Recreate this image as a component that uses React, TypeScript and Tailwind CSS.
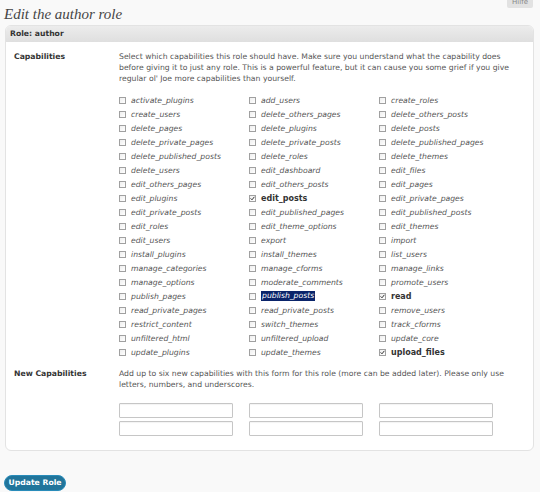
import React from "react";

const col1 = ["activate_plugins","create_users","delete_pages","delete_private_pages","delete_published_posts","delete_users","edit_others_pages","edit_plugins","edit_private_posts","edit_roles","edit_users","install_plugins","manage_categories","manage_options","publish_pages","read_private_pages","restrict_content","unfiltered_html","update_plugins"];
const col2 = ["add_users","delete_others_pages","delete_plugins","delete_private_posts","delete_roles","edit_dashboard","edit_others_posts","edit_posts","edit_published_pages","edit_theme_options","export","install_themes","manage_cforms","moderate_comments","publish_posts","read_private_posts","switch_themes","unfiltered_upload","update_themes"];
const col3 = ["create_roles","delete_others_posts","delete_posts","delete_published_pages","delete_themes","edit_files","edit_pages","edit_private_pages","edit_published_posts","edit_themes","import","list_users","manage_links","promote_users","read","remove_users","track_cforms","update_core","upload_files"];

const checked = new Set(["edit_posts", "read", "upload_files"]);

function Box({ on }: { on: boolean }) {
  return (
    <span className="w-[7px] h-[7px] border border-[#a0a0a0] bg-gradient-to-br from-[#eeeeee] to-white flex items-center justify-center shrink-0">
      {on && (
        <svg width="5" height="5" viewBox="0 0 5 5">
          <path d="M0.6 2.4 L2 3.8 L4.4 0.8" stroke="#333" strokeWidth="1" fill="none" />
        </svg>
      )}
    </span>
  );
}

function Cap({ name }: { name: string }) {
  const on = checked.has(name);
  const hl = name === "publish_posts";
  return (
    <div className="h-[14px] flex items-center gap-[5px]">
      <Box on={on} />
      {on ? (
        <span className="font-bold text-[#333] text-[8px]">{name}</span>
      ) : hl ? (
        <span className="italic text-white bg-[#0a246a] px-[1px] leading-[10px]">{name}</span>
      ) : (
        <span className="italic text-[#555]">{name}</span>
      )}
    </div>
  );
}

export default function App() {
  const rows = col1.map((_, i) => [col1[i], col2[i], col3[i]]);
  return (
    <div
      className="w-[540px] h-[492px] bg-[#f9f9f9] relative overflow-hidden text-[#333]"
      style={{ fontFamily: '"DejaVu Sans", Verdana, sans-serif' }}
    >
      <div className="absolute right-[7px] top-0 w-[26px] h-[8px] bg-[#e2e2e2] rounded-b-[2px] flex justify-center overflow-hidden">
        <span className="text-[7px] leading-[7px] text-[#888] -mt-[1px]">Hilfe</span>
      </div>

      <div className="pl-[4px] pt-[4px] h-[25px]">
        <h2
          className="italic text-[15px] leading-[20px] text-[#464646]"
          style={{ fontFamily: '"Liberation Serif", Georgia, serif' }}
        >
          Edit the author role
        </h2>
      </div>

      <div className="ml-[5px] w-[529px] border border-[#e3e3e3] rounded-[6px] bg-white overflow-hidden">
        <div className="h-[16px] bg-gradient-to-b from-[#ececec] to-[#dfdfdf] pl-[4px] flex items-center">
          <span className="text-[7.7px] font-bold text-[#333]">Role: author</span>
        </div>

        <div className="text-[7.7px] leading-[11px] pt-[9px] pb-[14px]">
          <div className="flex">
            <div className="w-[113px] pl-[8px] font-bold text-[#333]">Capabilities</div>
            <div className="flex-1 text-[#555]">
              <p className="w-[405px]">
                Select which capabilities this role should have. Make sure you understand what the capability does before giving it to just any role. This is a powerful feature, but it can cause you some grief if you give regular ol' Joe more capabilities than yourself.
              </p>
              <div className="mt-[9px] grid grid-cols-[130px_130px_130px]">
                {rows.map((r) =>
                  r.map((n) => <Cap key={n} name={n} />)
                )}
              </div>
            </div>
          </div>

          <div className="flex mt-[9px]">
            <div className="w-[113px] pl-[8px] font-bold text-[#333]">New Capabilities</div>
            <div className="flex-1 text-[#555]">
              <p className="w-[405px]">
                Add up to six new capabilities with this form for this role (more can be added later). Please only use letters, numbers, and underscores.
              </p>
              <div className="mt-[13px] grid grid-cols-[130px_130px_130px] gap-y-[3px]">
                {[0, 1, 2, 3, 4, 5].map((i) => (
                  <input
                    key={i}
                    type="text"
                    className="w-[114px] h-[15px] border border-[#c6c6c6] bg-white rounded-[1px] shadow-[inset_0_1px_1px_rgba(0,0,0,0.05)]"
                  />
                ))}
              </div>
            </div>
          </div>
        </div>
      </div>

      <div className="ml-[4px] mt-[24px] flex">
        <button className="h-[16px] w-[62px] rounded-full bg-[#21759b] border border-[#298cba] text-white font-bold text-[7.7px] leading-[14px] flex items-center justify-center">
          Update Role
        </button>
      </div>
    </div>
  );
}
